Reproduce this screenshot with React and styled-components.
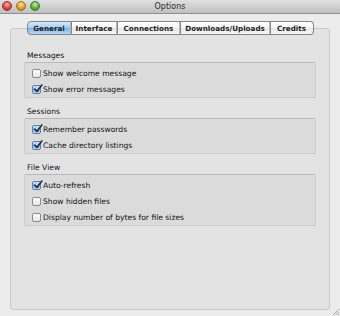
import React, { useState } from 'react'
import styled, { createGlobalStyle } from 'styled-components'

const GlobalStyle = createGlobalStyle`
  html, body {
    margin: 0;
    padding: 0;
    background: #ececec;
  }
  * {
    box-sizing: border-box;
  }
`

const Window = styled.div`
  width: 340px;
  height: 316px;
  background: #ececec;
  display: flex;
  flex-direction: column;
  position: relative;
  overflow: hidden;
  font-family: "DejaVu Sans", "Liberation Sans", sans-serif;
  color: #111;
`

const TitleBar = styled.div`
  height: 14px;
  flex-shrink: 0;
  display: flex;
  align-items: center;
  padding-left: 2px;
  position: relative;
  background: linear-gradient(#e0e0e0, #c0c0c0);
  border-bottom: 1px solid #8f8f8f;
`

const Lights = styled.div`
  display: flex;
  gap: 4px;
  margin-top: -1px;
`

const Light = styled.span`
  width: 10px;
  height: 10px;
  border-radius: 50%;
  border: 1px solid ${p => p.$edge};
  background: radial-gradient(circle at 50% 30%, ${p => p.$hi} 0%, ${p => p.$color} 55%, ${p => p.$edge} 100%);
`

const Title = styled.div`
  flex: 1;
  text-align: center;
  font-size: 8px;
  margin-left: -40px;
  margin-top: -1px;
  color: #2a2a2a;
`

const Body = styled.div`
  flex: 1;
  display: flex;
  flex-direction: column;
  padding: 7px 10px 6px;
`

const Tabs = styled.div`
  display: flex;
  justify-content: center;
  position: relative;
  z-index: 1;
  margin-bottom: -7px;
`

const Tab = styled.div`
  width: ${p => p.$w}px;
  height: 14px;
  display: flex;
  align-items: center;
  justify-content: center;
  font-size: 7.2px;
  font-weight: bold;
  color: #1e1e1e;
  border: 1px solid #858585;
  border-left-width: ${p => (p.$first ? 1 : 0)}px;
  border-radius: ${p => (p.$first ? '4px 0 0 4px' : p.$last ? '0 4px 4px 0' : '0')};
  background: ${p =>
    p.$active
      ? 'linear-gradient(#d5e8fb 0%, #a7cbf1 50%, #7fb4ec 52%, #b6d8f8 100%)'
      : 'linear-gradient(#ffffff 0%, #f4f4f4 50%, #e7e7e7 52%, #f7f7f7 100%)'};
  box-shadow: inset -1px 0 0 ${p => (p.$last ? 'transparent' : '#b9b9b9')};
`

const TabBox = styled.div`
  flex: 1;
  background: #e3e3e3;
  border: 1px solid #c9c9c9;
  border-radius: 3px;
  padding: 21px 13px 0 13px;
  display: flex;
  flex-direction: column;
  gap: 8px;
`

const Group = styled.div`
  display: flex;
  flex-direction: column;
`

const GroupLabel = styled.div`
  font-size: 7.6px;
  line-height: 12px;
  padding-left: 3px;
`

const GroupBox = styled.div`
  background: #dbdbdb;
  border: 1px solid #cbcbcb;
  border-top-color: #b9b9b9;
  border-radius: 2px;
  padding: 2px 7px 0;
  display: flex;
  flex-direction: column;
`

const Row = styled.label`
  height: 16px;
  display: flex;
  align-items: center;
  gap: 2px;
  font-size: 7.6px;
`

const Box = styled.span`
  width: 9px;
  height: 9px;
  border-radius: 2px;
  border: 1px solid ${p => (p.$on ? '#5a7fa8' : '#8c8c8c')};
  background: ${p =>
    p.$on
      ? 'linear-gradient(#d3e6fa 0%, #99c3ef 50%, #76adea 55%, #c0ddf9 100%)'
      : 'linear-gradient(#ffffff, #e6e6e6)'};
  flex-shrink: 0;
  position: relative;
`

const Check = () => (
  <svg width="10" height="10" viewBox="0 0 10 10" style={{ position: 'absolute', left: 0, top: -2 }}>
    <path d="M1.5 5 L4 7.5 L8.8 1" fill="none" stroke="#1d2a3a" strokeWidth="1.6" strokeLinecap="round" strokeLinejoin="round" />
  </svg>
)

const Grip = styled.svg`
  position: absolute;
  right: 1px;
  bottom: 1px;
`

const groups = [
  { title: 'Messages', items: [['Show welcome message', false], ['Show error messages', true]] },
  { title: 'Sessions', items: [['Remember passwords', true], ['Cache directory listings', true]] },
  {
    title: 'File View',
    items: [['Auto-refresh', true], ['Show hidden files', false], ['Display number of bytes for file sizes', false]]
  }
]

const tabs = [
  ['General', 45],
  ['Interface', 46],
  ['Connections', 63],
  ['Downloads/Uploads', 90],
  ['Credits', 43]
]

export default function App() {
  const [active] = useState(0)
  return (
    <Window>
      <GlobalStyle />
      <TitleBar>
        <Lights>
          <Light $color="#e0443e" $hi="#ffb3a8" $edge="#9e2a24" />
          <Light $color="#e4a125" $hi="#ffe2a0" $edge="#a0701a" />
          <Light $color="#5cb03c" $hi="#c6f0a8" $edge="#3b7a24" />
        </Lights>
        <Title>Options</Title>
      </TitleBar>
      <Body>
        <Tabs>
          {tabs.map(([name, w], i) => (
            <Tab key={name} $w={w} $active={i === active} $first={i === 0} $last={i === tabs.length - 1}>
              {name}
            </Tab>
          ))}
        </Tabs>
        <TabBox>
          {groups.map(g => (
            <Group key={g.title}>
              <GroupLabel>{g.title}</GroupLabel>
              <GroupBox>
                {g.items.map(([text, on]) => (
                  <Row key={text}>
                    <Box $on={on}>{on && <Check />}</Box>
                    {text}
                  </Row>
                ))}
              </GroupBox>
            </Group>
          ))}
        </TabBox>
      </Body>
      <Grip width="7" height="7" viewBox="0 0 7 7">
        <path d="M1 7 L7 1 M3.5 7 L7 3.5 M6 7 L7 6" stroke="#9a9a9a" strokeWidth="0.8" />
      </Grip>
    </Window>
  )
}
